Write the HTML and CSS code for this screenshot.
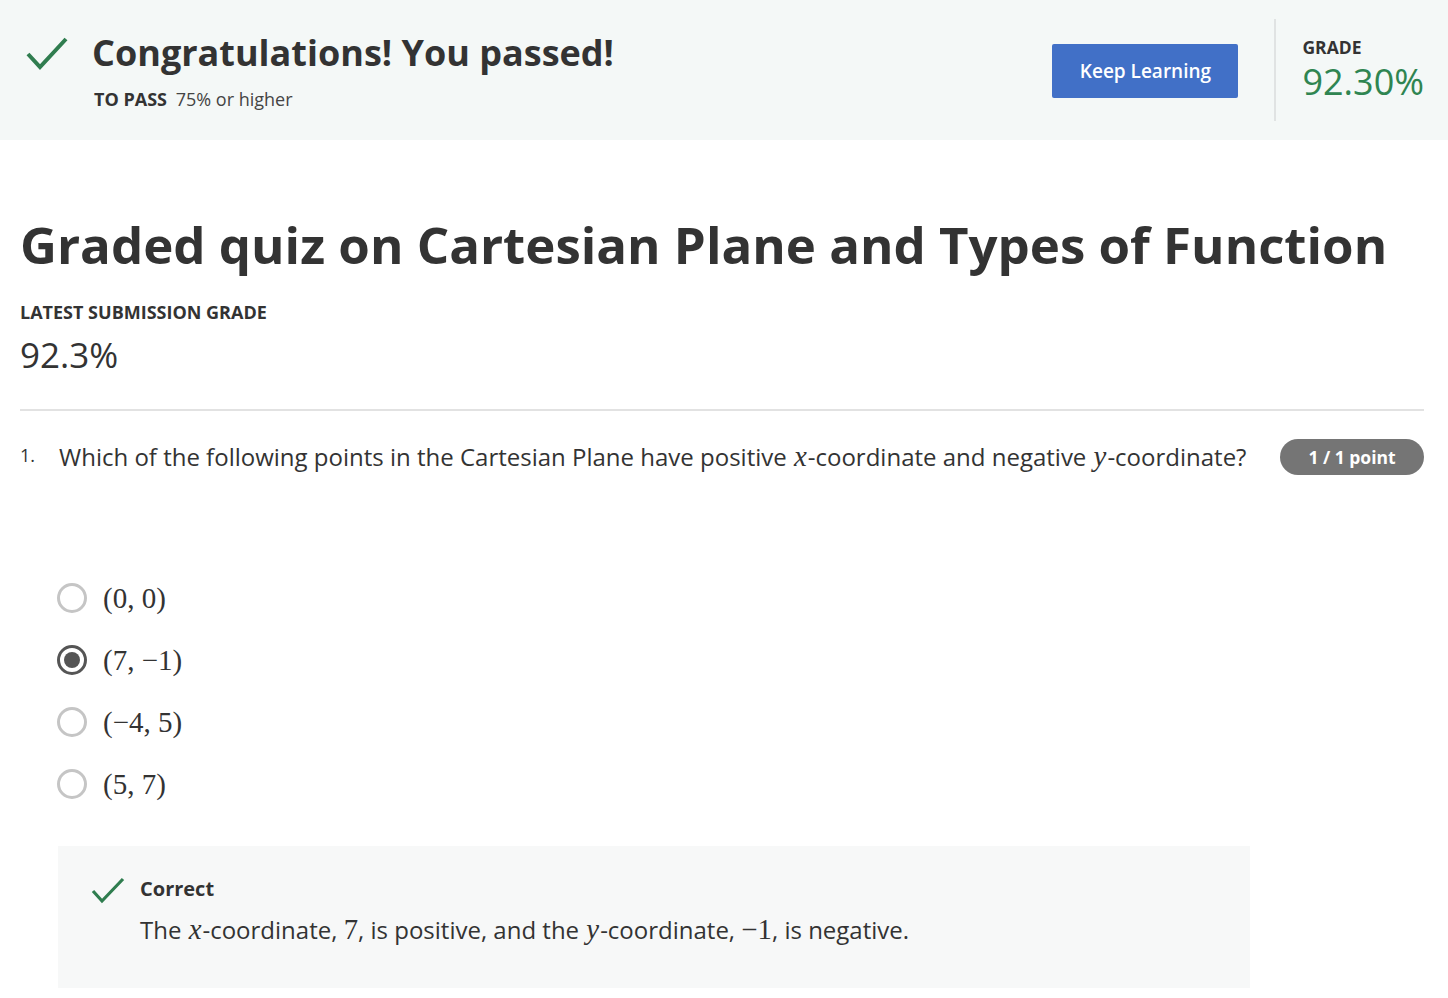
FILE: index.html
```html
<!DOCTYPE html>
<html>
<head>
<meta charset="utf-8">
<link rel="stylesheet" href="styles.css">
</head>
<body>
<header class="banner">
  <div class="banner-left">
    <svg class="check-big" width="44" height="36" viewBox="0 0 44 36"><path d="M3 18 L15 31 L41 3" fill="none" stroke="#2f7d4f" stroke-width="4"/></svg>
    <div class="banner-text">
      <h1 class="congrats">Congratulations! You passed!</h1>
      <div class="topass"><span class="topass-label">TO PASS</span> 75% or higher</div>
    </div>
  </div>
  <div class="banner-right">
    <button class="keep">Keep Learning</button>
    <div class="divider"></div>
    <div class="grade-box">
      <div class="grade-label">GRADE</div>
      <div class="grade-value">92.30%</div>
    </div>
  </div>
</header>
<main class="content">
  <h2 class="quiz-title">Graded quiz on Cartesian Plane and Types of Function</h2>
  <div class="latest-label">LATEST SUBMISSION GRADE</div>
  <div class="latest-value">92.3%</div>
  <hr class="sep">
  <div class="question">
    <div class="qnum">1.</div>
    <div class="qtext">Which of the following points in the Cartesian Plane have positive <span class="mi">x</span>-coordinate and negative <span class="mi">y</span>-coordinate?</div>
    <div class="badge">1 / 1 point</div>
  </div>
  <ul class="options">
    <li class="opt"><span class="radio"></span><span class="math">(0, 0)</span></li>
    <li class="opt"><span class="radio checked"></span><span class="math">(7, −1)</span></li>
    <li class="opt"><span class="radio"></span><span class="math">(−4, 5)</span></li>
    <li class="opt"><span class="radio"></span><span class="math">(5, 7)</span></li>
  </ul>
  <div class="feedback">
    <svg class="check-small" width="34" height="28" viewBox="0 0 34 28"><path d="M2 14 L11 24 L32 2" fill="none" stroke="#2f7d4f" stroke-width="3.2"/></svg>
    <div class="fb-text">
      <div class="fb-title">Correct</div>
      <div class="fb-body">The <span class="mi">x</span>-coordinate, <span class="mn">7</span>, is positive, and the <span class="mi">y</span>-coordinate, <span class="mn">−1</span>, is negative.</div>
    </div>
  </div>
</main>
</body>
</html>
```
FILE: styles.css
```css
* { box-sizing: border-box; }
html, body { margin: 0; padding: 0; background: #fff; }
body { font-family: "Open Sans", "Noto Sans", sans-serif; color: #1f1f1f; width: 1448px; overflow: hidden; }

.banner {
  height: 140px;
  background: #f4f8f7;
  display: flex;
  justify-content: space-between;
  align-items: center;
  padding: 0 24px 0 25px;
}
.banner-left { display: flex; align-items: flex-start; margin-top: 2px; }
.check-big { margin-top: 5px; margin-right: 23px; }
.congrats { margin: 0; font-size: 36px; font-weight: 700; color: #333; line-height: 44px; }
.topass { margin-top: 12px; font-size: 18px; color: #444; line-height: 24px; padding-left: 2px; }
.topass-label { font-weight: 700; color: #333; margin-right: 4px; }

.banner-right { display: flex; align-items: center; height: 100%; }
.keep {
  width: 186px; height: 54px;
  background: #4170c7; color: #fff;
  border: none; border-radius: 2px;
  font-family: "Open Sans", sans-serif; font-size: 19px; font-weight: 600;
  margin-right: 36px; margin-top: 2px;
}
.divider { width: 2px; height: 102px; background: #e0e3e3; margin-right: 26px; }
.grade-box { display: flex; flex-direction: column; }
.grade-label { font-size: 17.5px; font-weight: 700; color: #333; line-height: 22px; }
.grade-value { font-size: 36px; color: #2f8551; line-height: 44px; margin-top: 2px; }

.content { padding: 0 24px 0 20px; }
.quiz-title { margin: 70px 0 0; font-size: 51px; font-weight: 700; color: #333; line-height: 68px; }
.latest-label { margin-top: 22px; font-size: 18px; font-weight: 700; color: #333; }
.latest-value { margin-top: 9px; font-size: 35px; color: #333; line-height: 44px; }
.sep { border: none; border-top: 2px solid #e2e2e2; margin: 32px 0 0; }

.question { display: flex; align-items: flex-start; margin-top: 26px; }
.qnum { width: 39px; font-size: 18px; color: #333; line-height: 30px; margin-top: 3px; }
.qtext { flex: 1; font-size: 24px; color: #333; line-height: 38px; }
.badge {
  background: #757575; color: #fff; font-weight: 700; font-size: 17.5px;
  border-radius: 18px; height: 36px; width: 144px; flex: none;
  display: flex; align-items: center; justify-content: center;
  margin-top: 2px; margin-left: 30px;
}
.mi { font-family: "Liberation Serif", "DejaVu Serif", serif; font-style: italic; font-size: 1.2em; padding: 0 1px; }
.mn { font-family: "Liberation Serif", "DejaVu Serif", serif; font-size: 1.2em; }

.options { list-style: none; margin: 91px 0 0; padding: 0 0 0 37px; }
.opt { display: flex; align-items: center; height: 62px; }
.radio {
  width: 30px; height: 30px; border-radius: 50%;
  border: 3px solid #c5c5c5; margin-right: 16px; position: relative; flex: none;
}
.radio.checked { border-color: #555; }
.radio.checked::after {
  content: ""; position: absolute; left: 4px; top: 4px; width: 16px; height: 16px; border-radius: 50%; background: #555;
}
.math { font-family: "Liberation Serif", "DejaVu Serif", serif; font-size: 29px; color: #333; }

.feedback {
  margin: 31px 0 0 38px; width: 1192px; height: 142px;
  background: #f7f8f8; display: flex; align-items: flex-start;
  padding: 29px 0 0 33px;
}
.check-small { margin-right: 15px; margin-top: 2px; }
.fb-title { font-size: 20px; font-weight: 700; color: #333; line-height: 28px; }
.fb-body { margin-top: 10px; font-size: 24px; color: #333; line-height: 32px; }
```
